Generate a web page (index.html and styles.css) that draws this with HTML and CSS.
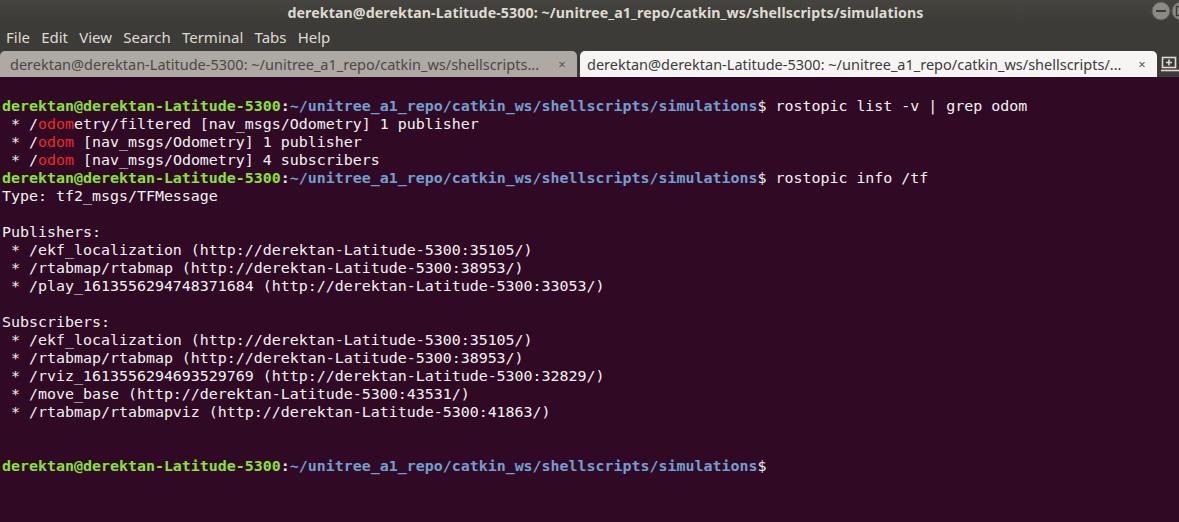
FILE: index.html
```html
<!DOCTYPE html>
<html>
<head>
<meta charset="utf-8">
<link rel="stylesheet" href="styles.css">
</head>
<body>
<div class="window">
  <div class="titlebar">
    <div class="title">derektan@derektan-Latitude-5300: ~/unitree_a1_repo/catkin_ws/shellscripts/simulations</div>
    <div class="winbtns">
      <span class="wbtn"><svg width="20" height="20" viewBox="0 0 20 20"><circle cx="10" cy="10" r="9" fill="#8b8a85" stroke="#5a5954"/><rect x="5" y="9" width="10" height="2" fill="#3c3b37"/></svg></span>
      <span class="wbtn"><svg width="20" height="20" viewBox="0 0 20 20"><circle cx="10" cy="10" r="9" fill="#8b8a85" stroke="#5a5954"/><rect x="5.5" y="5.5" width="9" height="9" fill="none" stroke="#3c3b37" stroke-width="1.5"/></svg></span>
    </div>
  </div>
  <div class="menubar">
    <span>File</span><span>Edit</span><span>View</span><span>Search</span><span>Terminal</span><span>Tabs</span><span>Help</span>
  </div>
  <div class="tabbar">
    <div class="tab inactive"><span class="tlabel">derektan@derektan-Latitude-5300: ~/unitree_a1_repo/catkin_ws/shellscripts...</span><span class="tclose">×</span></div>
    <div class="tab active"><span class="tlabel">derektan@derektan-Latitude-5300: ~/unitree_a1_repo/catkin_ws/shellscripts/...</span><span class="tclose">×</span></div>
    <div class="newtab"><svg width="18" height="16" viewBox="0 0 18 16"><rect x="1.5" y="1.5" width="13" height="10" fill="none" stroke="#dfdbd2" stroke-width="1.6"/><path d="M8 3.5v6M5 6.5h6" stroke="#dfdbd2" stroke-width="1.6"/><path d="M0 14.5h18" stroke="#dfdbd2" stroke-width="1.6"/></svg></div>
  </div>
  <div class="term"><pre class="out"><span class="pg">derektan@derektan-Latitude-5300</span><span class="pw">:</span><span class="pb">~/unitree_a1_repo/catkin_ws/shellscripts/simulations</span>$ rostopic list -v | grep odom
 * /<span class="hl">odom</span>etry/filtered [nav_msgs/Odometry] 1 publisher
 * /<span class="hl">odom</span> [nav_msgs/Odometry] 1 publisher
 * /<span class="hl">odom</span> [nav_msgs/Odometry] 4 subscribers
<span class="pg">derektan@derektan-Latitude-5300</span><span class="pw">:</span><span class="pb">~/unitree_a1_repo/catkin_ws/shellscripts/simulations</span>$ rostopic info /tf
Type: tf2_msgs/TFMessage

Publishers: 
 * /ekf_localization (http://derektan-Latitude-5300:35105/)
 * /rtabmap/rtabmap (http://derektan-Latitude-5300:38953/)
 * /play_1613556294748371684 (http://derektan-Latitude-5300:33053/)

Subscribers: 
 * /ekf_localization (http://derektan-Latitude-5300:35105/)
 * /rtabmap/rtabmap (http://derektan-Latitude-5300:38953/)
 * /rviz_1613556294693529769 (http://derektan-Latitude-5300:32829/)
 * /move_base (http://derektan-Latitude-5300:43531/)
 * /rtabmap/rtabmapviz (http://derektan-Latitude-5300:41863/)


<span class="pg">derektan@derektan-Latitude-5300</span><span class="pw">:</span><span class="pb">~/unitree_a1_repo/catkin_ws/shellscripts/simulations</span>$ </pre></div>
</div>
</body>
</html>
```

FILE: styles.css
```css
* { box-sizing: border-box; }
html, body { margin: 0; padding: 0; }
body {
  width: 1179px;
  height: 522px;
  overflow: hidden;
  background: #300a24;
  font-family: "Noto Sans", "DejaVu Sans", sans-serif;
}
.window {
  display: flex;
  flex-direction: column;
  height: 522px;
}
.titlebar {
  height: 24px;
  background: linear-gradient(#45443f, #3c3b37);
  display: flex;
  align-items: center;
  justify-content: center;
  position: relative;
}
.title {
  color: #dfdbd2;
  font-weight: bold;
  font-size: 14.2px;
  letter-spacing: 0.1px;
  padding-left: 32px;
}
.winbtns {
  position: absolute;
  right: -12px;
  top: 1px;
  display: flex;
}
.wbtn { display: block; width: 20px; height: 20px; }
.menubar {
  height: 26px;
  background: #3c3b37;
  display: flex;
  align-items: center;
  padding-left: 6px;
  color: #dfdbd2;
  font-size: 15px;
}
.menubar span { margin-right: 11.2px; }
.tabbar {
  height: 27px;
  background: #3c3b37;
  display: flex;
  align-items: flex-end;
}
.tab {
  height: 26px;
  border-radius: 5px 5px 0 0;
  display: flex;
  align-items: center;
  font-size: 14.5px;
  padding-left: 10px;
}
.tab.inactive {
  width: 577px;
  background: #aeaaa3;
  color: #4a4945;
}
.tab.active {
  width: 577px;
  margin-left: 3px;
  background: #f6f5f4;
  color: #3c3c3c;
  padding-left: 7px;
}
.tlabel { flex: 1; min-width: 0; white-space: nowrap; }
.tclose {
  flex: none;
  width: 30px;
  text-align: center;
  font-size: 13px;
  color: #555;
}
.newtab {
  flex: 1;
  display: flex;
  align-items: center;
  justify-content: center;
  height: 26px;
  padding-left: 4px;
}
.term {
  flex: 1;
  background: #300a24;
  padding-top: 20px;
  padding-left: 2px;
}
.out {
  margin: 0;
  font-family: "DejaVu Sans Mono", "Liberation Mono", monospace;
  font-size: 14.95px;
  line-height: 18px;
  color: #f2f2f2;
  white-space: pre;
}
.pg { color: #8ae234; font-weight: bold; }
.pw { color: #eeeeec; font-weight: bold; }
.pb { color: #729fcf; font-weight: bold; }
.hl { color: #ef2929; }
```
